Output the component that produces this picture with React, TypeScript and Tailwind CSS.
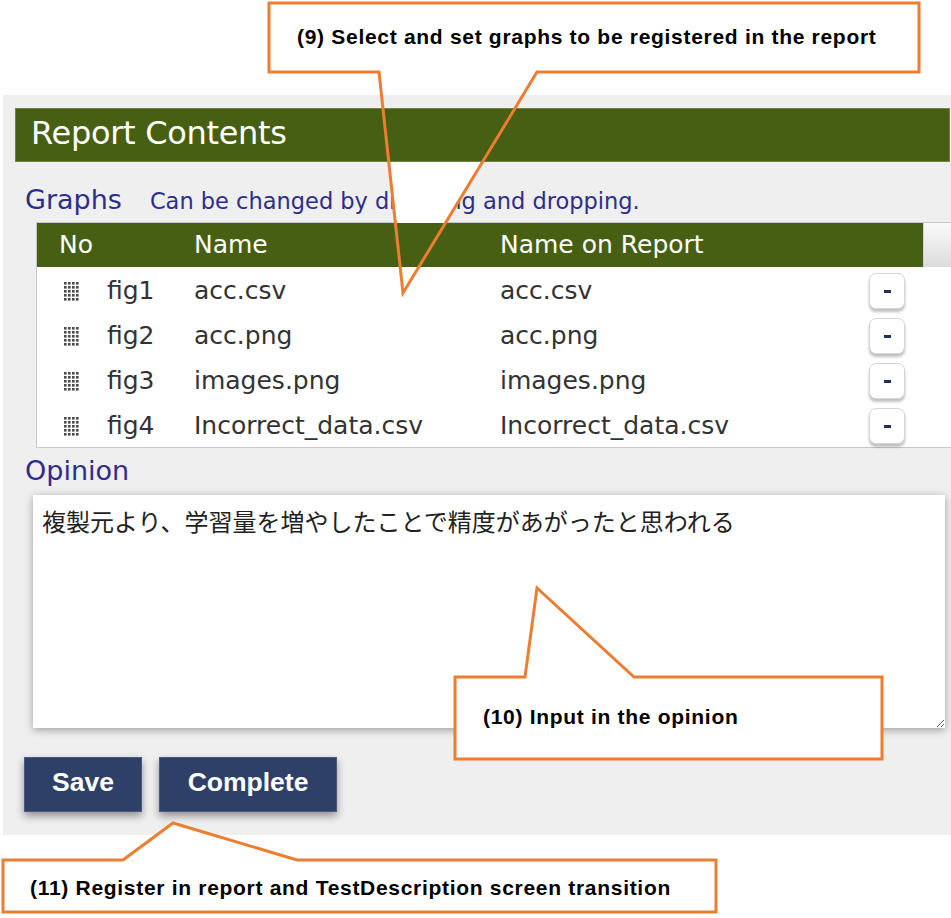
import React from "react";

const ORANGE = "#ed7d31";

function Grip() {
  const dots = [];
  for (let r = 0; r < 5; r++) {
    for (let c = 0; c < 4; c++) {
      dots.push(<rect key={`${r}-${c}`} x={c * 4} y={r * 4} width={2.6} height={2.6} fill="#4a4a4a" />);
    }
  }
  return (
    <svg width="15" height="19" viewBox="0 0 15 19">
      {dots}
    </svg>
  );
}

const rows = [
  { no: "fig1", name: "acc.csv" },
  { no: "fig2", name: "acc.png" },
  { no: "fig3", name: "images.png" },
  { no: "fig4", name: "Incorrect_data.csv" },
];

export default function App() {
  const ui = { fontFamily: '"DejaVu Sans", Verdana, sans-serif' };
  const callout = { fontFamily: '"Liberation Sans", Arial, sans-serif' };
  return (
    <div className="relative w-[951px] h-[918px] bg-white overflow-hidden" style={ui}>
      {/* Panel */}
      <div className="absolute left-[3px] top-[95px] w-[948px] h-[740px] bg-[#efefef] overflow-hidden">
        <div className="flex flex-col">
          {/* header */}
          <div className="ml-[12px] mt-[13px] w-[935px] h-[54px] bg-[#475f12] border border-[#6f8546] flex items-center pl-[15px] pb-[4px]">
            <span className="text-white text-[32px] leading-none tracking-[-0.3px]">Report Contents</span>
          </div>
          {/* Graphs label */}
          <div className="ml-[22px] mt-[22px] h-[38px] flex items-baseline">
            <span className="text-[#2d2d8c] text-[27px] leading-[32px]">Graphs</span>
            <span className="ml-[28px] text-[#2d2d8c] text-[22.5px] leading-[32px]">Can be changed by dragging and dropping.</span>
          </div>
          {/* Table */}
          <div className="ml-[33px] w-[960px] border-l border-b border-[#c8c8c8] bg-white">
            <div className="flex h-[45px] border-t border-[#c8c8c8]">
              <div className="w-[886px] bg-[#475f12] flex items-center text-white text-[25px]">
                <div className="w-[157px] pl-[22px]">No</div>
                <div className="w-[306px]">Name</div>
                <div>Name on Report</div>
              </div>
              <div className="flex-1 bg-gradient-to-b from-[#fafafa] to-[#dcdcdc] border-l border-[#d0d0d0]" />
            </div>
            {rows.map((r) => (
              <div key={r.no} className="flex items-center h-[45px] text-[25px] text-[#333] pt-[3px]">
                <div className="w-[70px] pl-[27px] flex items-center">
                  <Grip />
                </div>
                <div className="w-[87px]">{r.no}</div>
                <div className="w-[306px]">{r.name}</div>
                <div className="w-[369px]">{r.name}</div>
                <button className="w-[36px] h-[36px] rounded-[7px] bg-white border border-[#d6d6d6] shadow-[0_3px_3px_rgba(0,0,0,0.25)] flex items-center justify-center">
                  <span className="block w-[7px] h-[3px] bg-[#1f2e5a]" />
                </button>
              </div>
            ))}
          </div>
          {/* Opinion */}
          <div className="ml-[22px] mt-[5px] text-[#2d2d8c] text-[27px] leading-[36px]">Opinion</div>
          <textarea
            className="ml-[30px] mt-[6px] w-[912px] h-[233px] bg-white shadow-[0_2px_8px_rgba(0,0,0,0.35)] pt-[8px] pl-[9px] text-[24px] text-[#222] outline-none"
            style={{ fontFamily: '"Noto Sans CJK JP", sans-serif' }}
            defaultValue="複製元より、学習量を増やしたことで精度があがったと思われる"
          />
          {/* buttons */}
          <div className="ml-[21px] mt-[29px] flex gap-[17px]">
            <button
              className="w-[118px] h-[55px] bg-[#2e3f68] border border-[#4a5a80] text-white text-[26.5px] font-bold shadow-[0_4px_8px_rgba(0,0,0,0.4)] pb-[4px]"
              style={callout}
            >
              Save
            </button>
            <button
              className="w-[178px] h-[55px] bg-[#2e3f68] border border-[#4a5a80] text-white text-[26.5px] font-bold shadow-[0_4px_8px_rgba(0,0,0,0.4)] pb-[4px]"
              style={callout}
            >
              Complete
            </button>
          </div>
        </div>
      </div>

      {/* Callout shapes */}
      <svg className="absolute inset-0 pointer-events-none" width="951" height="918" viewBox="0 0 951 918">
        {/* 9 */}
        <rect x="269" y="3" width="650" height="69" fill="white" />
        <polygon points="389,162 482,162 445,223 395,223" fill="white" />
        <polygon
          points="269,3 919,3 919,72 537,72 403,293 379,72 269,72"
          fill="none"
          stroke={ORANGE}
          strokeWidth="3"
          strokeLinejoin="miter"
        />
        {/* 10 */}
        <polygon
          points="455,677 525,677 537,588 634,677 882,677 882,759 455,759"
          fill="white"
          stroke={ORANGE}
          strokeWidth="3"
        />
        {/* 11 */}
        <polygon
          points="3,860 123,860 173,823 297,860 716,860 716,912 3,912"
          fill="white"
          stroke={ORANGE}
          strokeWidth="3"
        />
      </svg>

      {/* Callout texts */}
      <div className="absolute left-[297px] top-[25px] text-[21px] tracking-[0.7px] font-bold text-black leading-[24px] whitespace-nowrap" style={callout}>
        (9) Select and set graphs to be registered in the report
      </div>
      <div className="absolute left-[483px] top-[705px] text-[21px] tracking-[0.7px] font-bold text-black leading-[24px] whitespace-nowrap" style={callout}>
        (10) Input in the opinion
      </div>
      <div className="absolute left-[30px] top-[876px] text-[21px] tracking-[0.7px] font-bold text-black leading-[24px] whitespace-nowrap" style={callout}>
        (11) Register in report and TestDescription screen transition
      </div>
    </div>
  );
}
